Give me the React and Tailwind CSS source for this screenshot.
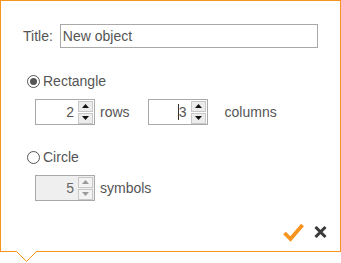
import React from "react"

const font = { fontFamily: '"Liberation Sans", Arial, sans-serif' }

function Spinner({ disabled }) {
  const arrow = disabled ? "#9a9a9a" : "#111"
  const bg = disabled ? "bg-[#f3f3f3]" : "bg-[#ececec]"
  return (
    <div className="flex flex-col gap-[1px] w-[15px] mr-[1px]">
      <div className={`h-[11px] ${bg} border border-[#c8c8c8] flex items-center justify-center`}>
        <svg width="7" height="4" viewBox="0 0 7 4">
          <polygon points="0,4 7,4 3.5,0" fill={arrow} />
        </svg>
      </div>
      <div className={`h-[11px] ${bg} border border-[#c8c8c8] flex items-center justify-center`}>
        <svg width="7" height="4" viewBox="0 0 7 4">
          <polygon points="0,0 7,0 3.5,4" fill={arrow} />
        </svg>
      </div>
    </div>
  )
}

function NumberBox({ value, disabled, caret }) {
  return (
    <div
      className={`w-[60px] h-[26px] border border-[#a9a9a9] flex items-center justify-end ${
        disabled ? "bg-[#efefef]" : "bg-white"
      }`}
    >
      <span className={`text-[14px] mr-[4px] flex items-center ${disabled ? "text-[#666]" : "text-[#555]"}`}>
        {caret && <span className="inline-block w-[1px] h-[16px] bg-[#333]" />}
        {value}
      </span>
      <Spinner disabled={disabled} />
    </div>
  )
}

function Radio({ checked, label }) {
  return (
    <div className="flex items-center h-[18px] pl-[26px]">
      <div className="w-[13px] h-[13px] rounded-full border-[1.5px] border-[#555] flex items-center justify-center">
        {checked && <div className="w-[7px] h-[7px] rounded-full bg-[#555]" />}
      </div>
      <span className="ml-[3px] text-[14px] text-[#555]">{label}</span>
    </div>
  )
}

export default function App() {
  return (
    <div className="relative w-[341px] h-[263px] bg-white" style={font}>
      <div className="w-[341px] h-[252px] border border-[#f7941d] bg-white flex flex-col pt-[23px]">
        <div className="flex items-center pl-[22px]">
          <span className="text-[14px] text-[#555]">Title:</span>
          <input
            readOnly
            value="New object"
            style={font}
            className="ml-[7px] w-[258px] h-[24px] border border-[#a9a9a9] px-[2px] text-[14px] text-[#555] outline-none"
          />
        </div>

        <div className="mt-[24px]">
          <Radio checked label="Rectangle" />
        </div>

        <div className="mt-[9px] flex items-center pl-[34px] text-[14px] text-[#555]">
          <NumberBox value="2" />
          <span className="ml-[5px]">rows</span>
          <div className="ml-[18px]">
            <NumberBox value="3" caret />
          </div>
          <span className="ml-[17px]">columns</span>
        </div>

        <div className="mt-[23px]">
          <Radio label="Circle" />
        </div>

        <div className="mt-[9px] flex items-center pl-[34px] text-[14px] text-[#555]">
          <NumberBox value="5" disabled />
          <span className="ml-[5px]">symbols</span>
        </div>

        <div className="mt-[21px] flex items-center justify-end pr-[13px] gap-[10px] h-[20px]">
          <svg width="21" height="19" viewBox="0 0 21 19">
            <polyline points="1.5,10 7.5,16 19.5,2" fill="none" stroke="#f7941d" strokeWidth="3.8" />
          </svg>
          <svg width="13" height="12" viewBox="0 0 13 12">
            <path d="M1.5 1 L11.5 11 M11.5 1 L1.5 11" stroke="#3a3a3a" strokeWidth="3" />
          </svg>
        </div>
      </div>
      <svg className="absolute left-0 top-[250px]" width="60" height="13" viewBox="0 0 60 13">
        <polygon points="17,0 36,0 36,1.5 26.5,11 17,1.5" fill="white" />
        <polyline points="16.5,1.5 26.5,11.5 36.5,1.5" fill="none" stroke="#f7941d" strokeWidth="1" />
      </svg>
    </div>
  )
}
